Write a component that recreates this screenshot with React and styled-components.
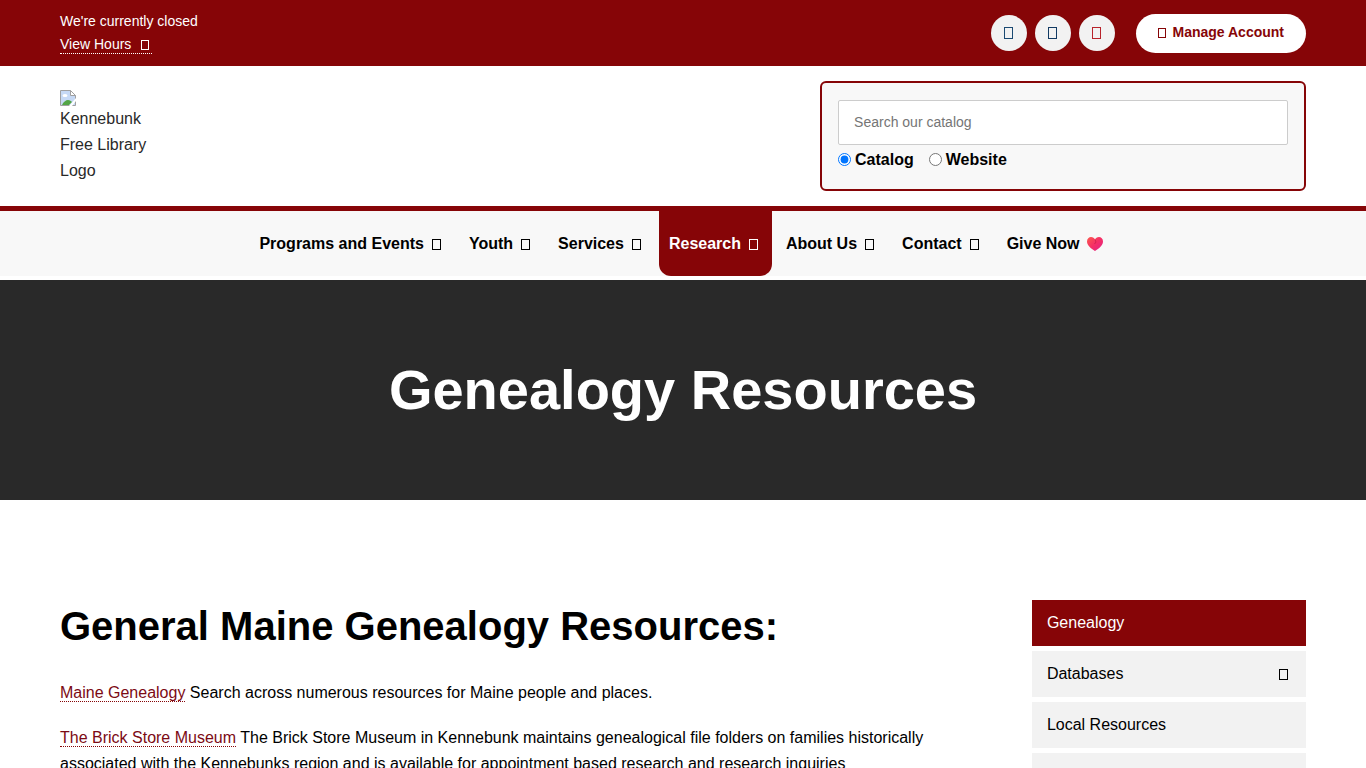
import React from 'react';
import styled, { createGlobalStyle } from 'styled-components';

const colors = {
  red: '#860507',
  link: '#7c0a14',
  dark: '#292929',
  light: '#f8f8f8',
  grey: '#f2f2f2',
  white: '#fff',
  black: '#000'
};

const GlobalStyle = createGlobalStyle`
  *, *::before, *::after {
    box-sizing: border-box;
  }
  body {
    margin: 0;
    background: ${colors.white};
    color: ${colors.black};
    font-family: "Liberation Sans", Arial, sans-serif;
    font-size: 16px;
    line-height: 26px;
  }
  a {
    color: inherit;
    text-decoration: none;
  }
`;

const StyledBox = styled.span`
  display: inline-block;
  flex: none;
  width: ${({ $large }) => ($large ? '9px' : '8px')};
  height: ${({ $large }) => ($large ? '11px' : '10px')};
  border: 1px solid currentColor;
`;

const StyledTopBar = styled.div`
  display: flex;
  align-items: center;
  justify-content: space-between;
  padding: 10px 60px;
  background: ${colors.red};
  color: ${colors.white};
  font-size: 14px;
  line-height: 23px;
`;

const StyledHours = styled.a`
  display: inline-flex;
  align-items: center;
  gap: 10px;
  padding-right: 3px;
  line-height: 17px;
  border-bottom: 1px dotted ${colors.white};
`;

const StyledActions = styled.div`
  display: flex;
  align-items: center;
  gap: 8px;
`;

const StyledSocial = styled.a`
  display: flex;
  align-items: center;
  justify-content: center;
  width: 36px;
  height: 36px;
  border-radius: 50%;
  background: ${colors.grey};
  color: ${({ $tint }) => $tint};

  ${StyledBox} {
    height: 12px;
  }
`;

const StyledAccount = styled.a`
  display: flex;
  align-items: center;
  gap: 7px;
  height: 39px;
  margin-left: 13px;
  padding: 0 22px 2px;
  border-radius: 20px;
  background: ${colors.white};
  color: ${colors.red};
  font-weight: bold;

  ${StyledBox} {
    margin-top: 2px;
  }
`;

const StyledHeader = styled.header`
  display: flex;
  align-items: flex-start;
  justify-content: space-between;
  padding: 15px 60px;
`;

const StyledLogo = styled.a`
  display: block;
  width: 92px;
  margin-top: 9px;
  color: ${colors.dark};

  svg {
    display: block;
  }
`;

const StyledSearch = styled.form`
  width: 39%;
  padding: 17px 16px 16px;
  border: 2px solid ${colors.red};
  border-radius: 6px;
  background: ${colors.light};
`;

const StyledInput = styled.input`
  display: block;
  width: 100%;
  height: 45px;
  padding: 0 15px 2px;
  border: 1px solid #ccc;
  border-radius: 2px;
  background: ${colors.white};
  font: inherit;
  font-size: 14px;

  &::placeholder {
    color: #757575;
  }
`;

const StyledRadios = styled.div`
  display: flex;
  gap: 15px;
  margin-top: 2px;
`;

const StyledRadio = styled.label`
  display: flex;
  align-items: center;
  gap: 4px;
  font-weight: bold;

  input {
    width: 13px;
    height: 13px;
    margin: 0 0 2px;
  }
`;

const StyledNav = styled.nav`
  display: flex;
  justify-content: center;
  gap: 4px;
  margin-bottom: 4px;
  border-top: 5px solid ${colors.red};
  background: ${colors.light};
`;

const StyledNavItem = styled.a`
  display: flex;
  align-items: center;
  height: 65px;
  padding: 0 10px;
  border-radius: 0 0 12px 12px;
  background: ${({ $active }) => ($active ? colors.red : 'transparent')};
  color: ${({ $active }) => ($active ? colors.white : colors.black)};
  font-weight: bold;

  ${StyledBox} {
    margin: 2px 4px 0 8px;
  }
  svg {
    margin: 0 3px 0 6px;
  }
`;

const StyledHero = styled.section`
  display: flex;
  align-items: center;
  justify-content: center;
  padding: 74px 60px;
  background: ${colors.dark};
  color: ${colors.white};

  h1 {
    margin: 0;
    font-size: 56px;
    line-height: 72px;
  }
`;

const StyledMain = styled.div`
  display: flex;
  align-items: flex-start;
  justify-content: space-between;
  padding: 100px 60px;
`;

const StyledArticle = styled.main`
  width: 72%;

  h2 {
    margin: 0 0 28px;
    font-size: 40px;
    line-height: 52px;
  }
  p {
    margin: 0 0 19px;
  }
  a {
    color: ${colors.link};
    border-bottom: 1px dotted ${colors.red};
  }
`;

const StyledSide = styled.aside`
  display: flex;
  flex-direction: column;
  gap: 5px;
  width: 22%;
`;

const StyledSideItem = styled.a`
  display: flex;
  align-items: center;
  justify-content: space-between;
  height: 46px;
  padding: 0 18px 0 15px;
  background: ${({ $active }) => ($active ? colors.red : colors.grey)};
  color: ${({ $active }) => ($active ? colors.white : colors.black)};
`;

const BrokenImage = () => (
  <svg width="16" height="16" viewBox="0 0 16 16" aria-hidden="true">
    <path d="M.5.5h10l5 5v10H.5z" fill="#c6d9f5" stroke="#a0a0a0" />
    <path d="M10.5.5v5h5z" fill="#fff" stroke="#a0a0a0" />
    <ellipse cx="5" cy="5.5" rx="2.5" ry="1.5" fill="#fff" />
    <path d="M2 15c1-3 4-5 6-5 2 0 3 1 4 2l-3 3z" fill="#53a546" />
    <path d="M9 16l7-8v3l-4 5z" fill="#fff" />
  </svg>
);

const Heart = () => (
  <svg width="18" height="16" viewBox="0 0 18 16" aria-hidden="true">
    <defs>
      <linearGradient id="heart" x1="0" y1="0" x2="1" y2="1">
        <stop offset="0" stopColor="#fb5a4e" />
        <stop offset="0.5" stopColor="#f52f66" />
        <stop offset="1" stopColor="#e0218a" />
      </linearGradient>
    </defs>
    <path d="M9 15C5 12.5 1 9.5 1 5.5 1 2.5 3 1 5 1c2 0 3.3 1 4 2.5C9.7 2 11 1 13 1c2 0 4 1.5 4 4.5 0 4-4 7-8 9.500z" fill="url(#heart)" />
    <path d="M9 3.500l1 2.500-1.500 2" fill="none" stroke="#c81e4f" strokeWidth="0.8" />
  </svg>
);

const socials = [
  { name: 'Facebook', tint: '#1b4a72' },
  { name: 'Twitter', tint: '#123a63' },
  { name: 'YouTube', tint: '#b8232b' }
];

const navItems = ['Programs and Events', 'Youth', 'Services', 'Research', 'About Us', 'Contact'];

const sideItems = [
  { label: 'Genealogy', active: true },
  { label: 'Databases', expandable: true },
  { label: 'Local Resources' },
  { label: '' }
];

const App = () => (
  <>
    <GlobalStyle />
    <StyledTopBar>
      <div>
        <div>We're currently closed</div>
        <StyledHours href="#hours">
          View Hours
          <StyledBox />
        </StyledHours>
      </div>
      <StyledActions>
        {socials.map(({ name, tint }) => (
          <StyledSocial key={name} href="#social" aria-label={name} $tint={tint}>
            <StyledBox $large />
          </StyledSocial>
        ))}
        <StyledAccount href="#account">
          <StyledBox />
          Manage Account
        </StyledAccount>
      </StyledActions>
    </StyledTopBar>

    <StyledHeader>
      <StyledLogo href="#home">
        <BrokenImage />
        Kennebunk Free Library Logo
      </StyledLogo>
      <StyledSearch onSubmit={e => e.preventDefault()}>
        <StyledInput type="text" placeholder="Search our catalog" aria-label="Search our catalog" />
        <StyledRadios>
          <StyledRadio htmlFor="catalog">
            <input id="catalog" type="radio" name="scope" defaultChecked />
            Catalog
          </StyledRadio>
          <StyledRadio htmlFor="website">
            <input id="website" type="radio" name="scope" />
            Website
          </StyledRadio>
        </StyledRadios>
      </StyledSearch>
    </StyledHeader>

    <StyledNav>
      {navItems.map(label => (
        <StyledNavItem key={label} href="#nav" $active={label === 'Research'}>
          {label}
          <StyledBox $large />
        </StyledNavItem>
      ))}
      <StyledNavItem href="#give">
        Give Now
        <Heart />
      </StyledNavItem>
    </StyledNav>

    <StyledHero>
      <h1>Genealogy Resources</h1>
    </StyledHero>

    <StyledMain>
      <StyledArticle>
        <h2>General Maine Genealogy Resources:</h2>
        <p>
          <a href="#maine">Maine Genealogy</a> Search across numerous resources for Maine people and places.
        </p>
        <p>
          <a href="#brick">The Brick Store Museum</a> The Brick Store Museum in Kennebunk maintains genealogical file
          folders on families historically associated with the Kennebunks region and is available for appointment based
          research and research inquiries
        </p>
      </StyledArticle>
      <StyledSide>
        {sideItems.map(({ label, active, expandable }) => (
          <StyledSideItem key={label} href="#side" $active={active}>
            {label}
            {expandable && <StyledBox $large />}
          </StyledSideItem>
        ))}
      </StyledSide>
    </StyledMain>
  </>
);

export default App;
